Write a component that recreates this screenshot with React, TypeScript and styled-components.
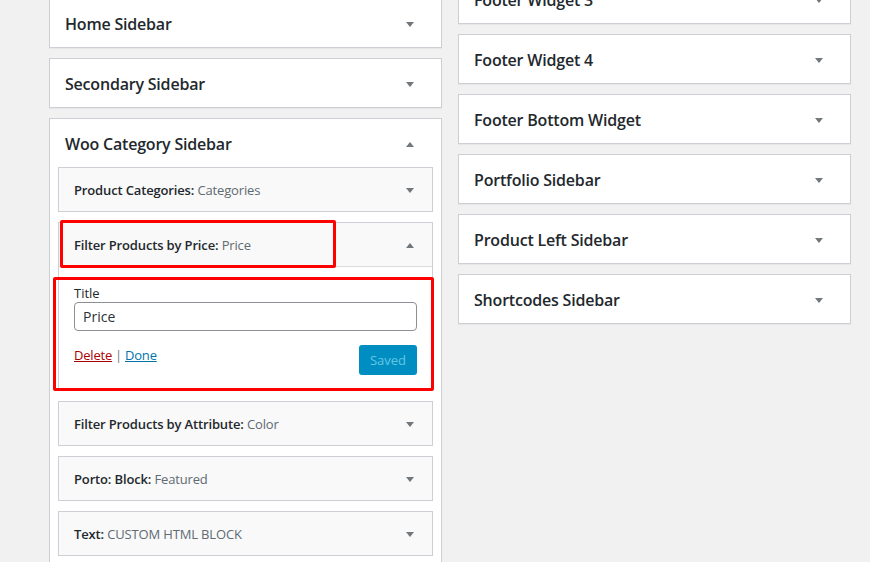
import React from "react";
import styled, { createGlobalStyle } from "styled-components";

const GlobalStyle = createGlobalStyle`
  html, body {
    margin: 0;
    padding: 0;
    background: #f1f1f1;
    overflow: hidden;
  }
  body {
    font-family: "Open Sans", "Noto Sans", sans-serif;
    color: #23282d;
  }
`;

const Page = styled.div`
  display: flex;
  align-items: flex-start;
  gap: 16px;
  padding-left: 49px;
  width: 870px;
  height: 562px;
  box-sizing: border-box;
  overflow: hidden;
`;

const Column = styled.div<{ $offset: number }>`
  width: 393px;
  margin-top: ${(p) => p.$offset}px;
  display: flex;
  flex-direction: column;
  gap: 10px;
`;

const Sidebar = styled.div`
  background: #fff;
  border: 1px solid #ccd0d4;
  box-shadow: 0 1px 1px rgba(0, 0, 0, 0.04);
`;

const SidebarHead = styled.div`
  height: 48px;
  box-sizing: border-box;
  display: flex;
  align-items: center;
  justify-content: space-between;
  padding: 2px 27px 0 15px;
`;

const SidebarName = styled.h2`
  margin: 0;
  font-size: 16px;
  font-weight: 600;
  letter-spacing: -0.2px;
  color: #23282d;
`;

const Arrow = styled.span<{ $up?: boolean }>`
  width: 0;
  height: 0;
  border-left: 4px solid transparent;
  border-right: 4px solid transparent;
  ${(p) =>
    p.$up
      ? "border-bottom: 5px solid #72777c;"
      : "border-top: 5px solid #72777c;"}
`;

const Widgets = styled.div`
  padding: 0 8px 8px;
  display: flex;
  flex-direction: column;
  gap: 10px;
`;

const Widget = styled.div<{ $open?: boolean }>`
  position: relative;
  background: ${(p) => (p.$open ? "#fff" : "#f9f9f9")};
  border: 1px solid #ccd0d4;
`;

const WidgetHead = styled.div<{ $open?: boolean }>`
  height: ${(p) => (p.$open ? 44 : 43)}px;
  box-sizing: border-box;
  display: flex;
  align-items: center;
  justify-content: space-between;
  padding: 1px 18px 0 15px;
  background: #f9f9f9;
  border-bottom: ${(p) => (p.$open ? "1px solid #dcdcde" : "none")};
  font-size: 13px;
  letter-spacing: -0.15px;
`;

const WidgetTitle = styled.span`
  font-weight: 600;
  color: #23282d;
`;

const InWidgetTitle = styled.span`
  font-weight: 400;
  color: #606a73;
`;

const WidgetBody = styled.div`
  padding: 18px 15px 15px;
  font-size: 13px;
`;

const Label = styled.label`
  display: block;
  line-height: 17px;
  color: #23282d;
`;

const TextInput = styled.input`
  display: block;
  width: 100%;
  height: 29px;
  box-sizing: border-box;
  padding: 0 8px;
  border: 1px solid #8c8f94;
  border-radius: 4px;
  font-family: inherit;
  font-size: 14px;
  color: #2c3338;
  background: #fff;
  outline: none;
`;

const Actions = styled.div`
  display: flex;
  justify-content: space-between;
  align-items: flex-start;
  margin-top: 14px;
`;

const Links = styled.div`
  display: flex;
  gap: 3px;
  padding-top: 1px;
  color: #72777c;
  letter-spacing: -0.2px;
`;

const ActionLink = styled.a<{ $danger?: boolean }>`
  color: ${(p) => (p.$danger ? "#a00" : "#0073aa")};
  text-decoration: underline;
`;

const SavedButton = styled.button`
  height: 30px;
  padding: 0 11px;
  border: none;
  border-radius: 3px;
  background: #008ec2;
  color: #66c6e4;
  font-family: inherit;
  font-size: 13px;
`;

const Highlight = styled.div<{ $l: number; $t: number; $w: number; $h: number }>`
  position: absolute;
  left: ${(p) => p.$l}px;
  top: ${(p) => p.$t}px;
  width: ${(p) => p.$w}px;
  height: ${(p) => p.$h}px;
  box-sizing: border-box;
  border: 3px solid #ff0000;
  border-radius: 2px;
  pointer-events: none;
`;

type Item = { name: string; title: string };

const collapsed: Item[] = [
  { name: "Filter Products by Attribute:", title: "Color" },
  { name: "Porto: Block:", title: "Featured" },
  { name: "Text:", title: "CUSTOM HTML BLOCK" },
];

function ClosedSidebar({ name }: { name: string }) {
  return (
    <Sidebar>
      <SidebarHead>
        <SidebarName>{name}</SidebarName>
        <Arrow />
      </SidebarHead>
    </Sidebar>
  );
}

function ClosedWidget({ name, title }: Item) {
  return (
    <Widget>
      <WidgetHead>
        <span>
          <WidgetTitle>{name}</WidgetTitle> <InWidgetTitle>{title}</InWidgetTitle>
        </span>
        <Arrow />
      </WidgetHead>
    </Widget>
  );
}

export default function App() {
  return (
    <>
      <GlobalStyle />
      <Page>
        <Column $offset={-2}>
          <ClosedSidebar name="Home Sidebar" />
          <ClosedSidebar name="Secondary Sidebar" />
          <Sidebar>
            <SidebarHead>
              <SidebarName>Woo Category Sidebar</SidebarName>
              <Arrow $up />
            </SidebarHead>
            <Widgets>
              <ClosedWidget name="Product Categories:" title="Categories" />
              <Widget $open>
                <WidgetHead $open>
                  <span>
                    <WidgetTitle>Filter Products by Price:</WidgetTitle>{" "}
                    <InWidgetTitle>Price</InWidgetTitle>
                  </span>
                  <Arrow $up />
                </WidgetHead>
                <WidgetBody>
                  <Label>Title</Label>
                  <TextInput defaultValue="Price" />
                  <Actions>
                    <Links>
                      <ActionLink $danger href="#">Delete</ActionLink>
                      <span>|</span>
                      <ActionLink href="#">Done</ActionLink>
                    </Links>
                    <SavedButton disabled>Saved</SavedButton>
                  </Actions>
                </WidgetBody>
                <Highlight $l={1} $t={-3} $w={276} $h={48} />
                <Highlight $l={-6} $t={54} $w={381} $h={114} />
              </Widget>
              {collapsed.map((w) => (
                <ClosedWidget key={w.name} {...w} />
              ))}
            </Widgets>
          </Sidebar>
        </Column>
        <Column $offset={-26}>
          <ClosedSidebar name="Footer Widget 3" />
          <ClosedSidebar name="Footer Widget 4" />
          <ClosedSidebar name="Footer Bottom Widget" />
          <ClosedSidebar name="Portfolio Sidebar" />
          <ClosedSidebar name="Product Left Sidebar" />
          <ClosedSidebar name="Shortcodes Sidebar" />
        </Column>
      </Page>
    </>
  );
}
